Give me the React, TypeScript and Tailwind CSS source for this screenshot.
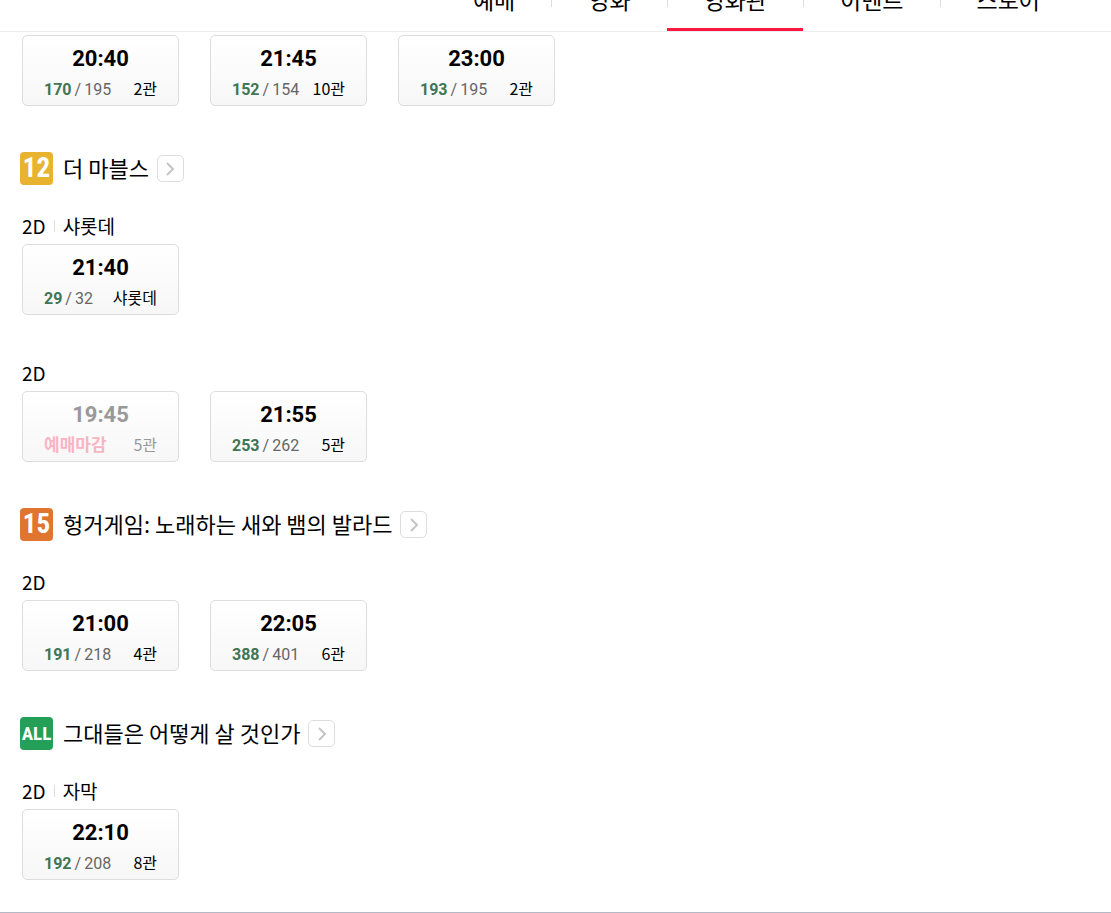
type Showing = { time: string; left?: number; total?: number; hall: string; closed?: boolean };
type Group = { format?: string; note?: string; showings: Showing[] };
type Rating = '12' | '15' | 'ALL';
type Movie = { title: string; rating: Rating; groups: Group[] };

const menu = [
  { label: '예매' },
  { label: '영화' },
  { label: '영화관', active: true },
  { label: '이벤트' },
  { label: '스토어' },
];

const earlier: Showing[] = [
  { time: '20:40', left: 170, total: 195, hall: '2관' },
  { time: '21:45', left: 152, total: 154, hall: '10관' },
  { time: '23:00', left: 193, total: 195, hall: '2관' },
];

const movies: Movie[] = [
  {
    title: '더 마블스',
    rating: '12',
    groups: [
      { format: '2D', note: '샤롯데', showings: [{ time: '21:40', left: 29, total: 32, hall: '샤롯데' }] },
      {
        format: '2D',
        showings: [
          { time: '19:45', hall: '5관', closed: true },
          { time: '21:55', left: 253, total: 262, hall: '5관' },
        ],
      },
    ],
  },
  {
    title: '헝거게임: 노래하는 새와 뱀의 발라드',
    rating: '15',
    groups: [
      {
        format: '2D',
        showings: [
          { time: '21:00', left: 191, total: 218, hall: '4관' },
          { time: '22:05', left: 388, total: 401, hall: '6관' },
        ],
      },
    ],
  },
  {
    title: '그대들은 어떻게 살 것인가',
    rating: 'ALL',
    groups: [{ format: '2D', note: '자막', showings: [{ time: '22:10', left: 192, total: 208, hall: '8관' }] }],
  },
];

const badgeStyle: Record<Rating, string> = {
  '12': 'bg-[#e8b430] text-[27px]',
  '15': 'bg-[#e0752f] text-[27px]',
  ALL: 'bg-[#249f57] text-[19px]',
};

function Badge({ rating }: { rating: Rating }) {
  return (
    <span
      className={`flex size-[33px] shrink-0 items-center justify-center rounded font-['Roboto_Condensed','Open_Sans_Condensed','Liberation_Sans',sans-serif] leading-none font-bold text-white ${badgeStyle[rating]}`}
    >
      {rating}
    </span>
  );
}

function ShowingCard({ time, left, total, hall, closed }: Showing) {
  return (
    <button
      type="button"
      disabled={closed}
      className="flex h-[71px] w-[157px] flex-col gap-[3px] rounded-[5px] border border-[#dddddd] bg-linear-to-b from-white to-[#f7f7f7] px-[21px] pt-[9px]"
    >
      <span
        className={`w-full text-center font-[Roboto,sans-serif] text-[22px] leading-7 font-bold ${closed ? 'text-[#999999]' : 'text-black'}`}
      >
        {time}
      </span>
      <span className="flex w-full items-baseline justify-between text-base leading-6">
        {closed ? (
          <span className="text-[17px] font-bold text-[#f9b4c3]">예매마감</span>
        ) : (
          <span className="flex gap-[3px] font-[Roboto,sans-serif] text-[#666666]">
            <strong className="font-bold text-[#417554]">{left}</strong>
            <span>/</span>
            <span>{total}</span>
          </span>
        )}
        <span className={closed ? 'text-[#999999]' : 'text-black'}>{hall}</span>
      </span>
    </button>
  );
}

function ShowingGroup({ format, note, showings }: Group) {
  return (
    <div className="pl-0.5">
      {format && (
        <div className="mb-1.5 flex items-center text-[19px] leading-6">
          <span>{format}</span>
          {note && <span className="mx-2 h-3 w-px bg-[#dddddd]" />}
          {note && <span>{note}</span>}
        </div>
      )}
      <div className="flex flex-wrap gap-[31px]">
        {showings.map((s) => (
          <ShowingCard key={s.time} {...s} />
        ))}
      </div>
    </div>
  );
}

function MovieSection({ title, rating, groups }: Movie) {
  return (
    <section>
      <div className="mb-[29px] flex h-[33px] items-center">
        <Badge rating={rating} />
        <h2 className="ml-2.5 pb-[3px] text-[22px] leading-[30px]">{title}</h2>
        <a
          href="#"
          aria-label={title}
          className="ml-2 flex size-[27px] items-center justify-center rounded-[5px] border border-[#dddddd] bg-white"
        >
          <svg width="10" height="14" viewBox="0 0 10 14" fill="none" stroke="#c4c4c4" strokeWidth="2">
            <path d="M2 1 L8 7 L2 13" />
          </svg>
        </a>
      </div>
      <div className="flex flex-col gap-[46px]">
        {groups.map((g) => (
          <ShowingGroup key={g.showings[0].time} {...g} />
        ))}
      </div>
    </section>
  );
}

export default function App() {
  return (
    <div className="border-b border-[#b4b9c6] bg-white font-['Noto_Sans_CJK_KR',sans-serif] text-black">
      <header className="flex h-8 items-end justify-end overflow-hidden border-b border-[#ebebeb] pr-[35px]">
        <nav className="flex h-[62px]">
          {menu.map(({ label, active }, i) => (
            <a
              key={label}
              href="#"
              className={`flex items-center border-b-3 pt-[3px] text-[23px] leading-8 ${active ? 'border-[#ff1744]' : 'border-transparent'}`}
            >
              <span className={`h-3.5 w-px ${i > 0 ? 'bg-[#dddddd]' : ''}`} />
              <span className="px-9 pb-[3px]">{label}</span>
            </a>
          ))}
        </nav>
      </header>
      <main className="flex flex-col gap-[46px] px-5 pt-[3px] pb-8">
        <ShowingGroup showings={earlier} />
        {movies.map((m) => (
          <MovieSection key={m.title} {...m} />
        ))}
      </main>
    </div>
  );
}
